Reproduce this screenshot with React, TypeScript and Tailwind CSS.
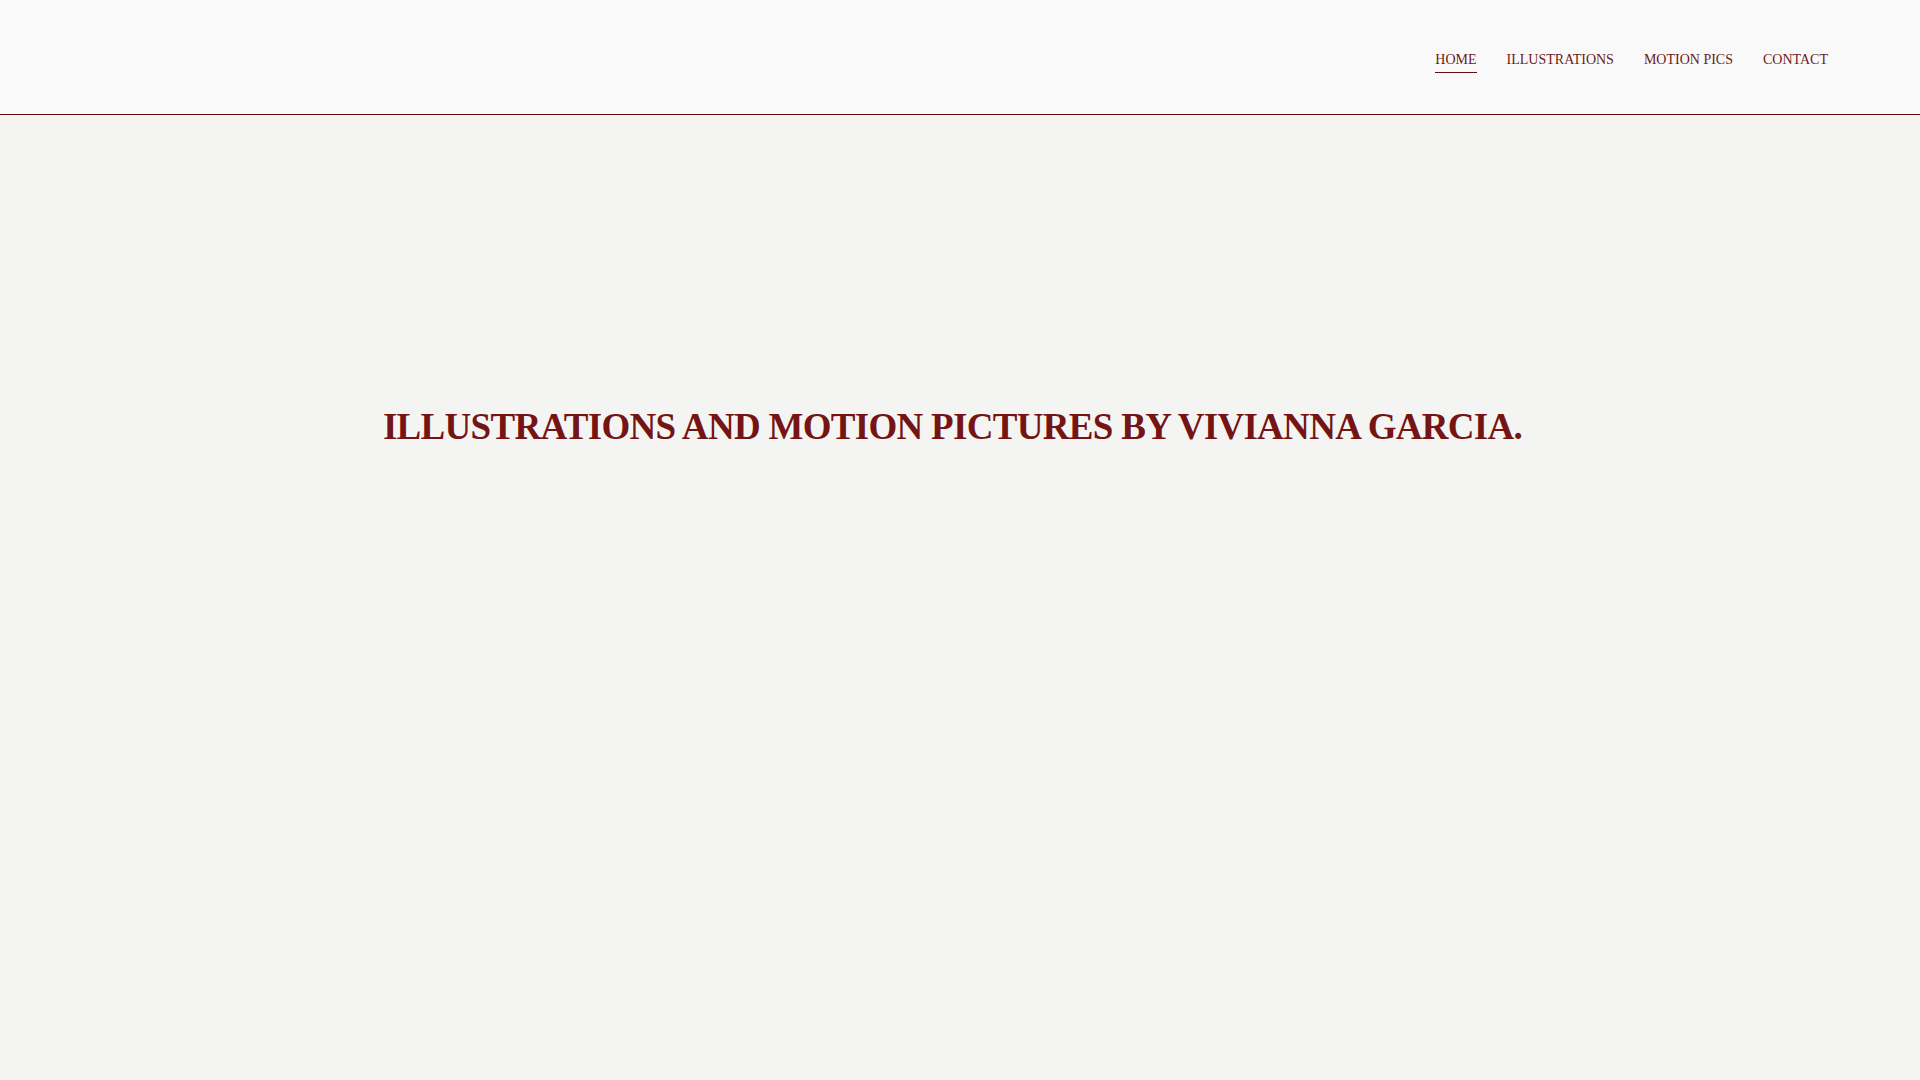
import React from 'react';

const links = [
  { label: 'HOME', active: true },
  { label: 'ILLUSTRATIONS', active: false },
  { label: 'MOTION PICS', active: false },
  { label: 'CONTACT', active: false },
];

export default function App() {
  return (
    <div className="h-screen overflow-y-scroll bg-[#f4f4f2] font-['Liberation_Serif','Times_New_Roman',serif]">
      {/* Header */}
      <header className="h-[115px] bg-[#f9f9f9] border-b border-[#6b0a0a] flex justify-end items-start pr-[92px] pt-[52px]">
        <nav className="flex gap-[30px]">
          {links.map((link) => (
            <a
              key={link.label}
              href="#"
              className={`text-[14px] leading-[16px] text-[#6e1a1a] pb-[4px] border-b ${link.active ? 'border-[#6b0a0a]' : 'border-transparent'}`}
            >
              {link.label}
            </a>
          ))}
        </nav>
      </header>

      {/* Hero */}
      <main className="h-[1485px] pt-[293px] pr-[15px]">
        <h1 className="text-center text-[37px] leading-[37px] font-bold tracking-[-0.7px] text-[#741414]">
          ILLUSTRATIONS AND MOTION PICTURES BY VIVIANNA GARCIA.
        </h1>
      </main>
    </div>
  );
}
